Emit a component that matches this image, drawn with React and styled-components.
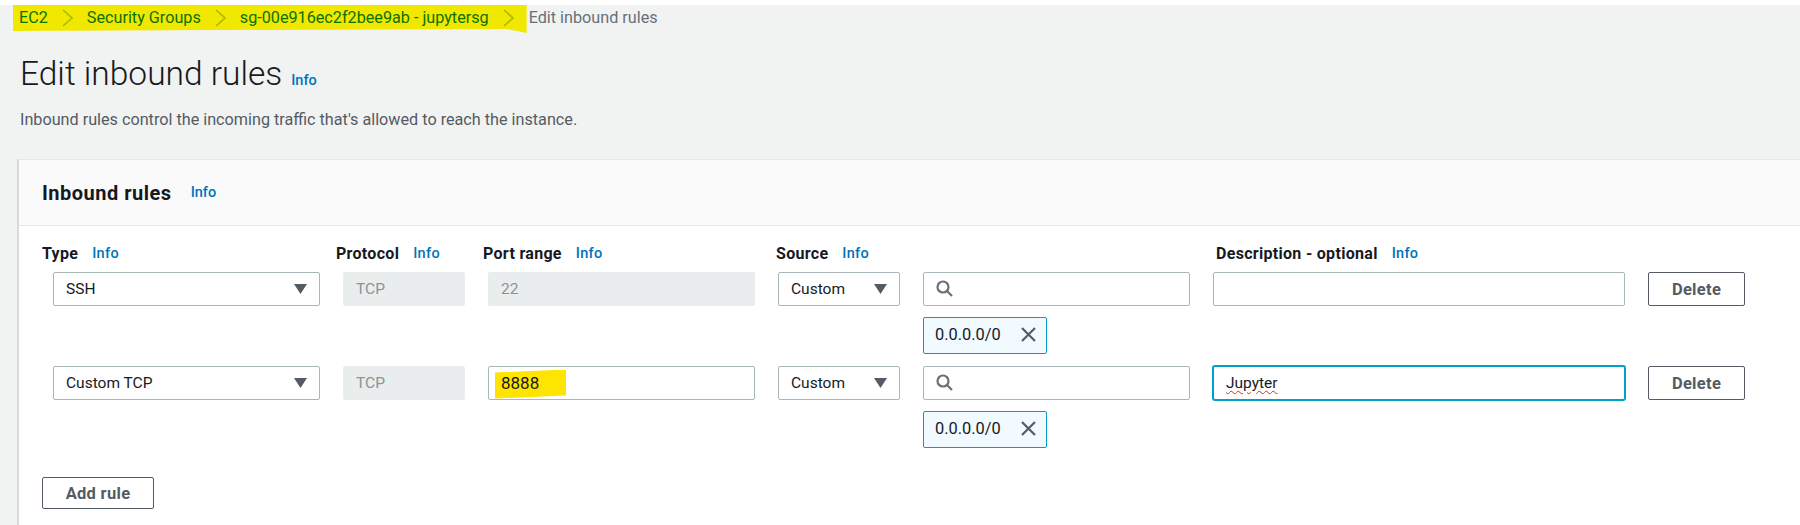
import React from 'react'
import styled, { createGlobalStyle } from 'styled-components'

const GlobalStyle = createGlobalStyle`
  html, body { margin: 0; padding: 0; background: #fff; }
  body { font-family: Roboto, "Liberation Sans", sans-serif; color: #16191f; }
`

const Page = styled.div`
  margin-top: 5px;
  height: 520px;
  overflow: hidden;
  background: #f1f3f3;
  display: flex;
  flex-direction: column;
`

const Breadcrumbs = styled.nav`
  display: flex;
  align-items: flex-start;
  padding-left: 13px;
  height: 28px;
  font-size: 16.2px;
`

const Highlight = styled.div`
  display: flex;
  align-items: center;
  gap: 14px;
  height: 28px;
  padding: 0 13px 3px 6px;
  box-sizing: border-box;
  background: #f0e800;
  clip-path: polygon(0 0, 100% 0, 100% 100%, 96% 24px, 40% 25px, 0 26px);
`

const Crumb = styled.span`
  color: #0b7100;
  white-space: nowrap;
`

const CurrentCrumb = styled.span`
  color: #687078;
  margin-left: 2px;
  line-height: 25px;
  white-space: nowrap;
`

const Heading = styled.header`
  display: flex;
  align-items: baseline;
  gap: 9px;
  padding: 22px 0 0 20px;
`

const Title = styled.h1`
  margin: 0;
  font-size: 33.5px;
  line-height: 38px;
  font-weight: 300;
`

const Info = styled.a`
  color: #0073bb;
  font-size: 14.5px;
  font-weight: 500;
`

const Description = styled.p`
  margin: 17px 0 0 20px;
  font-size: 16.2px;
  line-height: 20px;
  color: #545b64;
`

const Card = styled.section`
  flex: 1;
  margin: 29px 0 0 17px;
  background: #fff;
  border-left: 2px solid #d5dbdb;
  border-top: 1px solid #e4e8e8;
`

const CardHeader = styled.div`
  display: flex;
  align-items: center;
  gap: 19px;
  height: 65px;
  padding-left: 23px;
  background: #fafafa;
  border-bottom: 1px solid #e4e8e8;
`

const CardTitle = styled.h2`
  margin: 0;
  font-size: 20px;
  letter-spacing: 0.5px;
  font-weight: 700;
`

const LabelRow = styled.div`
  display: grid;
  grid-template-columns: 294px 147px 293px 440px 1fr;
  padding: 17px 0 0 23px;
  height: 29px;
  box-sizing: content-box;
`

const LabelCell = styled.div`
  display: flex;
  align-items: center;
  gap: 14px;
  height: 20px;
  font-size: 16px;
  letter-spacing: 0.3px;
  font-weight: 700;
`

const RuleRow = styled.div`
  display: grid;
  grid-template-columns: 267px 122px 267px 122px 267px 412px 97px;
  column-gap: 23px;
  padding-left: 34px;
  margin-top: ${(p) => p.$top || 0}px;
`

const Control = styled.div`
  display: flex;
  align-items: center;
  justify-content: space-between;
  height: 34px;
  box-sizing: border-box;
  padding: 0 12px 1px;
  font-size: 15.5px;
  background: #fff;
  border: 1px solid #aab7b8;
  border-radius: 2px;
`

const Disabled = styled(Control)`
  background: #eaeded;
  border-color: #eaeded;
  color: #879596;
`

const Focused = styled(Control)`
  border-color: #00a1c9;
  box-shadow: 0 0 0 1px #00a1c9;
`

const Misspelled = styled.span`
  text-decoration: underline wavy #d13212 1px;
  text-underline-offset: 2px;
`

const Marked = styled.span`
  position: relative;
  z-index: 0;
  font-size: 17px;
  &::before {
    content: '';
    position: absolute;
    z-index: -1;
    left: -6px;
    top: -3px;
    width: 71px;
    height: 29px;
    background: #ffe400;
    clip-path: polygon(0 3px, 100% 0, 100% 26px, 0 100%);
  }
`

const SourceStack = styled.div`
  display: flex;
  flex-direction: column;
  align-items: flex-start;
  gap: 11px;
`

const SearchBox = styled(Control)`
  justify-content: flex-start;
  align-self: stretch;
`

const Token = styled.div`
  display: flex;
  align-items: center;
  justify-content: space-between;
  width: 124px;
  height: 37px;
  box-sizing: border-box;
  padding: 0 10px 3px 11px;
  font-size: 16.4px;
  background: #f1faff;
  border: 1px solid #00a1c9;
  border-radius: 2px;
`

const Button = styled.button`
  height: ${(p) => p.$height || 34}px;
  width: ${(p) => p.$width || 97}px;
  padding: 0;
  font-family: inherit;
  font-size: 16.5px;
  letter-spacing: 0.3px;
  font-weight: 700;
  color: #545b64;
  background: #fff;
  border: 1px solid #545b64;
  border-radius: 2px;
`

const Footer = styled.div`
  padding: 29px 0 0 23px;
`

const Chevron = () => (
  <svg width="11" height="18" viewBox="0 0 11 18" fill="none" stroke="#a9b800" strokeWidth="1.6">
    <polyline points="1,1 10,9 1,17" />
  </svg>
)

const Caret = () => (
  <svg width="13" height="10" viewBox="0 0 13 10" fill="#545b64">
    <polygon points="0,0 13,0 6.5,10" />
  </svg>
)

const SearchIcon = () => (
  <svg width="17" height="17" viewBox="0 0 17 17" fill="none" stroke="#687078" strokeWidth="2.2">
    <circle cx="7" cy="7" r="5.5" />
    <line x1="11" y1="11" x2="16" y2="16" />
  </svg>
)

const CloseIcon = () => (
  <svg width="15" height="15" viewBox="0 0 15 15" fill="none" stroke="#545b64" strokeWidth="2.2">
    <line x1="1" y1="1" x2="14" y2="14" />
    <line x1="14" y1="1" x2="1" y2="14" />
  </svg>
)

const labels = [
  { text: 'Type' },
  { text: 'Protocol' },
  { text: 'Port range' },
  { text: 'Source' },
  { text: 'Description - optional' },
]

const Select = ({ children }) => (
  <Control>
    <span>{children}</span>
    <Caret />
  </Control>
)

const Rule = ({ type, port, portDisabled, description, top }) => (
  <RuleRow $top={top}>
    <Select>{type}</Select>
    <Disabled>TCP</Disabled>
    {portDisabled ? <Disabled>{port}</Disabled> : <Control><Marked>{port}</Marked></Control>}
    <Select>Custom</Select>
    <SourceStack>
      <SearchBox><SearchIcon /></SearchBox>
      <Token>
        <span>0.0.0.0/0</span>
        <CloseIcon />
      </Token>
    </SourceStack>
    {description ? (
      <Focused><Misspelled>{description}</Misspelled></Focused>
    ) : (
      <Control />
    )}
    <Button>Delete</Button>
  </RuleRow>
)

export default function App() {
  return (
    <>
      <GlobalStyle />
      <Page>
        <Breadcrumbs>
          <Highlight>
            <Crumb>EC2</Crumb>
            <Chevron />
            <Crumb>Security Groups</Crumb>
            <Chevron />
            <Crumb>sg-00e916ec2f2bee9ab - jupytersg</Crumb>
            <Chevron />
          </Highlight>
          <CurrentCrumb>Edit inbound rules</CurrentCrumb>
        </Breadcrumbs>
        <Heading>
          <Title>Edit inbound rules</Title>
          <Info>Info</Info>
        </Heading>
        <Description>Inbound rules control the incoming traffic that's allowed to reach the instance.</Description>
        <Card>
          <CardHeader>
            <CardTitle>Inbound rules</CardTitle>
            <Info>Info</Info>
          </CardHeader>
          <LabelRow>
            {labels.map((l) => (
              <LabelCell key={l.text}>
                {l.text}
                <Info>Info</Info>
              </LabelCell>
            ))}
          </LabelRow>
          <Rule type="SSH" port="22" portDisabled />
          <Rule type="Custom TCP" port="8888" description="Jupyter" top={12} />
          <Footer>
            <Button $width={112} $height={32}>Add rule</Button>
          </Footer>
        </Card>
      </Page>
    </>
  )
}
